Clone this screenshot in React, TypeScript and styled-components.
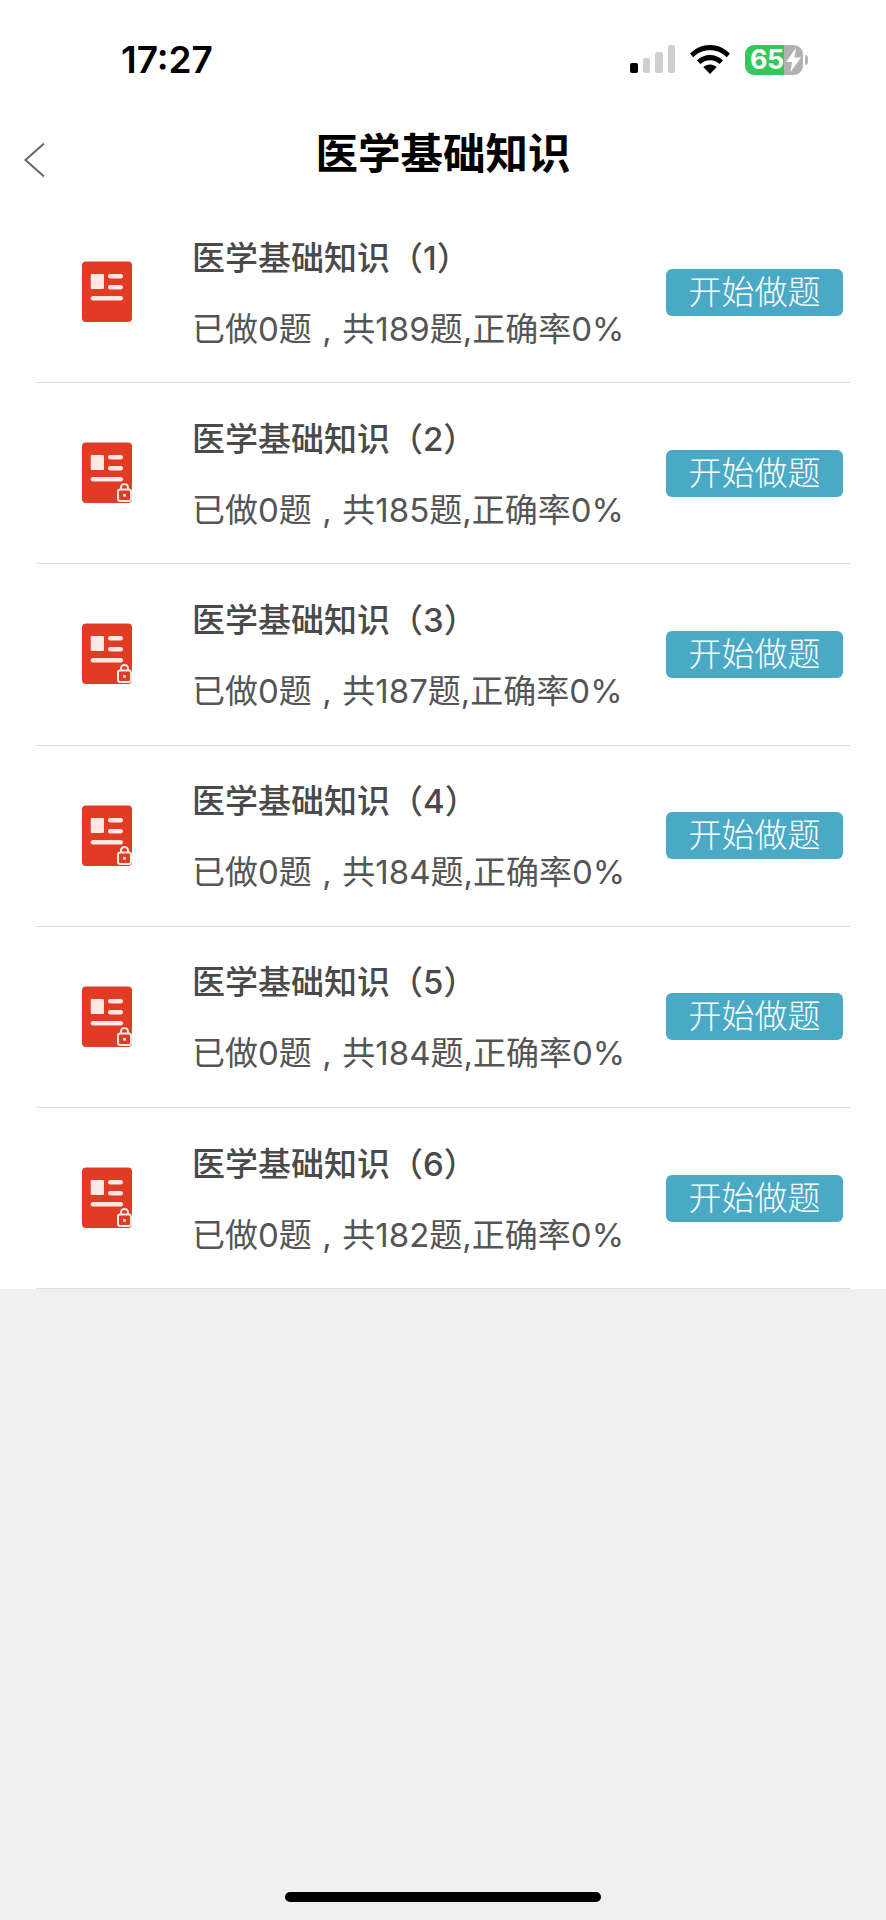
import React from 'react'
import styled, { createGlobalStyle } from 'styled-components'

const QUIZZES = [
  { id: 1, total: 189, locked: false },
  { id: 2, total: 185, locked: true },
  { id: 3, total: 187, locked: true },
  { id: 4, total: 184, locked: true },
  { id: 5, total: 184, locked: true },
  { id: 6, total: 182, locked: true },
]

export default function App(): JSX.Element {
  return (
    <>
      <GlobalStyle />
      <PageSCP>
        <WhiteAreaSCP>
          <StatusBarSCP>
            <TimeSCP>17:27</TimeSCP>
            <StatusIconsSCP>
              <SignalSCP>
                <SignalBarSCP $height={10} $active />
                <SignalBarSCP $height={15} />
                <SignalBarSCP $height={21} />
                <SignalBarSCP $height={28} />
              </SignalSCP>
              <WifiIcon />
              <BatterySCP>
                <BatteryBodySCP>
                  <BatteryLevelSCP>65</BatteryLevelSCP>
                  <BoltIcon />
                </BatteryBodySCP>
                <BatteryNubSCP />
              </BatterySCP>
            </StatusIconsSCP>
          </StatusBarSCP>

          <NavBarSCP>
            <BackButtonSCP>
              <svg width="22" height="36" viewBox="0 0 22 36" fill="none">
                <path d="M21 1.5 L2.5 18 L21 34.5" stroke="#666" strokeWidth="2" />
              </svg>
            </BackButtonSCP>
            <TitleSCP>医学基础知识</TitleSCP>
          </NavBarSCP>

          <ListSCP>
            {QUIZZES.map(quiz => (
              <RowSCP key={quiz.id}>
                <QuizIcon locked={quiz.locked} />
                <RowTextSCP>
                  <RowTitleSCP>医学基础知识（{quiz.id}）</RowTitleSCP>
                  <RowInfoSCP>
                    已做0题<CommaSCP>,</CommaSCP>共{quiz.total}题,正确率0%
                  </RowInfoSCP>
                </RowTextSCP>
                <StartButtonSCP>开始做题</StartButtonSCP>
              </RowSCP>
            ))}
          </ListSCP>
        </WhiteAreaSCP>
        <HomeIndicatorSCP />
      </PageSCP>
    </>
  )
}

function QuizIcon(props: { locked: boolean }): JSX.Element {
  return (
    <IconSvgSCP width="52" height="62" viewBox="0 0 52 62">
      <rect x="0" y="0.5" width="50" height="60.5" rx="4" fill="#e13a25" />
      <rect x="8.7" y="13" width="13.3" height="15" rx="1" fill="#fde9e4" />
      <rect x="26" y="13" width="15" height="4.6" rx="2.3" fill="#fde9e4" />
      <rect x="26" y="24" width="15" height="4.6" rx="2.3" fill="#fde9e4" />
      <rect x="8.7" y="35" width="32.3" height="4.4" rx="2.2" fill="#fde9e4" />
      {props.locked && (
        <g fill="none" stroke="#fde9e4" strokeWidth="2">
          <rect x="36" y="47.5" width="13" height="11.5" rx="2.2" />
          <path d="M39 47.5 V45.5 a3.5 3.5 0 0 1 7 0 V47.5" />
          <rect x="41.2" y="52" width="2.6" height="2.6" fill="#fde9e4" stroke="none" />
        </g>
      )}
    </IconSvgSCP>
  )
}

function WifiIcon(): JSX.Element {
  return (
    <svg width="40" height="29" viewBox="0 0 40 29" fill="#000">
      <path d="M20 0 C28 0 34.5 3.2 40 8.6 L36.8 12.2 C32.2 7.8 26.6 5.2 20 5.2 C13.4 5.2 7.8 7.8 3.2 12.2 L0 8.6 C5.5 3.2 12 0 20 0 Z" />
      <path d="M20 10 C25 10 29.4 12 33 15.4 L29.7 19 C27 16.6 23.8 15.2 20 15.2 C16.2 15.2 13 16.6 10.3 19 L7 15.4 C10.6 12 15 10 20 10 Z" />
      <path d="M20 19.6 C22.6 19.6 24.8 20.6 26.6 22.2 L20 29 L13.4 22.2 C15.2 20.6 17.4 19.6 20 19.6 Z" />
    </svg>
  )
}

function BoltIcon(): JSX.Element {
  return (
    <svg width="15" height="24" viewBox="0 0 15 24" fill="#fff">
      <path d="M10 0 L0 14 H6 L4.5 24 L15 9.5 H8.5 Z" />
    </svg>
  )
}

const GlobalStyle = createGlobalStyle`
  html, body {
    margin: 0;
    padding: 0;
    background: #f0f0f0;
  }

  body {
    font-family: 'Inter', 'Noto Sans CJK SC', sans-serif;
  }
`

const PageSCP = styled.div`
  position: relative;
  width: 886px;
  height: 1920px;
  overflow: hidden;
  background: #f0f0f0;
`

const WhiteAreaSCP = styled.div`
  background: #fff;
`

const StatusBarSCP = styled.div`
  height: 106px;
  display: flex;
  justify-content: space-between;
  padding: 41px 78px 0 121px;
  box-sizing: border-box;
`

const TimeSCP = styled.div`
  font-size: 37px;
  font-weight: 600;
  line-height: 38px;
  color: #000;
`

const StatusIconsSCP = styled.div`
  display: flex;
  align-items: flex-start;
  gap: 15px;
  margin-top: 4px;
`

const SignalSCP = styled.div`
  display: flex;
  align-items: flex-end;
  gap: 5px;
  height: 28px;
`

const SignalBarSCP = styled.div<{ $height: number; $active?: boolean }>`
  width: 7.5px;
  height: ${props => props.$height}px;
  border-radius: 2px;
  background: ${props => (props.$active ? '#000' : '#cfcfcf')};
`

const BatterySCP = styled.div`
  display: flex;
  align-items: center;
  gap: 2px;
`

const BatteryBodySCP = styled.div`
  display: flex;
  align-items: center;
  gap: 2px;
  width: 58px;
  height: 30px;
  padding-left: 5px;
  box-sizing: border-box;
  border-radius: 9px;
  background: linear-gradient(to right, #34c759 39px, #b2b2b2 39px);
`

const BatteryLevelSCP = styled.div`
  color: #fff;
  font-size: 27px;
  font-weight: 700;
  line-height: 30px;
  letter-spacing: -0.5px;
  white-space: nowrap;
`

const BatteryNubSCP = styled.div`
  width: 3px;
  height: 10px;
  border-radius: 0 3px 3px 0;
  background: #b8b8b8;
`

const NavBarSCP = styled.div`
  position: relative;
  height: 96px;
  display: flex;
  align-items: center;
  justify-content: center;
`

const BackButtonSCP = styled.div`
  position: absolute;
  left: 23px;
  top: 36px;
  line-height: 0;
`

const TitleSCP = styled.div`
  font-size: 42.5px;
  font-weight: 700;
  color: #000;
  line-height: 56px;
`

const ListSCP = styled.div`
  padding: 0 36px;
`

const RowSCP = styled.div`
  height: 181.2px;
  box-sizing: border-box;
  border-bottom: 1px solid #dcdcdc;
  display: flex;
  align-items: center;
  padding: 0 7px 0 46px;
`

const IconSvgSCP = styled.svg`
  flex: none;
  display: block;
  margin-right: 58px;
`

const RowTextSCP = styled.div`
  flex: 1;
  display: flex;
  flex-direction: column;
  gap: 27px;
  padding-top: 2px;
  min-width: 0;
`

const RowTitleSCP = styled.div`
  font-size: 33px;
  font-weight: 500;
  line-height: 44px;
  color: #4a4a4a;
  white-space: nowrap;
`

const RowInfoSCP = styled.div`
  font-size: 33px;
  font-weight: 400;
  line-height: 44px;
  color: #555;
  white-space: nowrap;
`

const CommaSCP = styled.span`
  margin: 0 10.5px;
`

const StartButtonSCP = styled.div`
  flex: none;
  width: 177px;
  height: 47px;
  border-radius: 6px;
  background: #4aaac6;
  color: #fff;
  font-size: 33px;
  font-weight: 300;
  line-height: 47px;
  text-align: center;
`

const HomeIndicatorSCP = styled.div`
  position: absolute;
  left: 285px;
  top: 1892px;
  width: 316px;
  height: 10px;
  border-radius: 5px;
  background: #000;
`
